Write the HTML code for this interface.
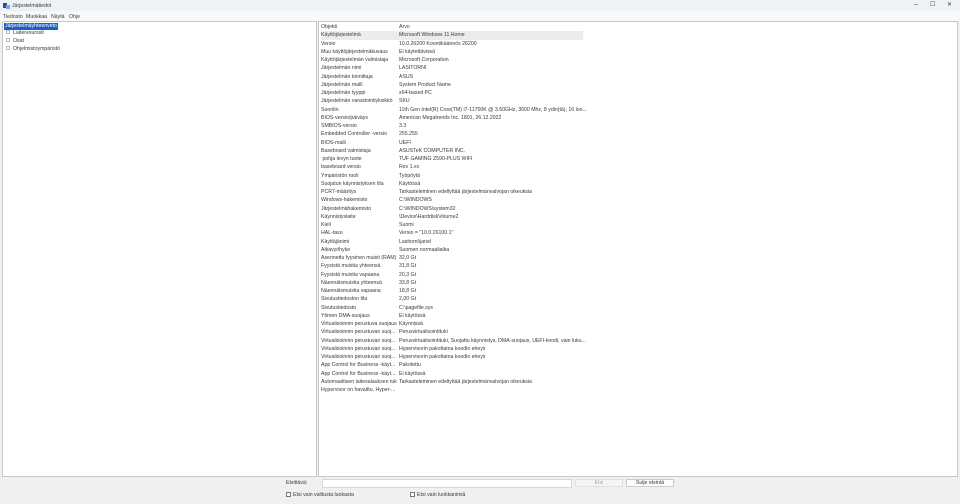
<!DOCTYPE html>
<html><head><meta charset="utf-8">
<style>
*{margin:0;padding:0;box-sizing:border-box}
body{width:960px;height:504px;background:#f0f0f0;font-family:"Liberation Sans",sans-serif;font-size:5.2px;color:#3a3a3a;position:relative;overflow:hidden}
.title{position:absolute;left:0;top:0;width:960px;height:11px;background:#eef2f7}
.title span{position:absolute;left:12px;top:3px}
.menu{position:absolute;left:0;top:11px;width:960px;height:10px;background:#f9f9f9}
.menu span{position:absolute;top:2.5px}
.pane{position:absolute;background:#fff;border:1px solid #c8c8c8}
.rows{position:absolute;left:321px;top:23px}
.r{height:8.25px;line-height:8.25px;white-space:nowrap;position:relative;width:262px}
.r b{font-weight:normal;position:absolute;left:0;width:76px;overflow:hidden}
.r i{font-style:normal;position:absolute;left:78px}
.sel{background:#ececec}
.cb{display:inline-block;width:5px;height:5px;border:1px solid #777;vertical-align:-1px;margin-right:2px;background:#fff}
.btn{position:absolute;height:8px;border:1px solid #ccc;background:#fdfdfd;text-align:center;line-height:6px}
.tree{position:absolute;left:3px;height:7px;line-height:7px;white-space:nowrap}
.plus{display:inline-block;width:4px;height:4px;border:1px solid #bbb;margin-right:3px;vertical-align:0}
</style></head><body>
<div class="title"><svg style="position:absolute;left:3px;top:2px" width="7" height="7"><rect x="0" y="1" width="4" height="5" fill="#2a4d9b"/><rect x="3" y="3" width="4" height="4" fill="#7aa7e0"/></svg><span>Järjestelmätiedot</span>
<span style="left:914px;top:1px;font-size:7px">–</span><span style="left:930px;top:1px;font-size:6px">☐</span><span style="left:947px;top:1px;font-size:6px">✕</span></div>
<div class="menu"><span style="left:3px">Tiedosto</span><span style="left:26px">Muokkaa</span><span style="left:51px">Näytä</span><span style="left:69px">Ohje</span></div>
<div class="pane" style="left:2px;top:21px;width:315px;height:456px">
<div class="tree" style="left:1px;top:1px;background:#1a5fc8;color:#fff;padding:0 1px">Järjestelmäyhteenveto</div>
<div class="tree" style="top:8px"><span class="plus"></span>Laiteresurssit</div>
<div class="tree" style="top:16px"><span class="plus"></span>Osat</div>
<div class="tree" style="top:24px"><span class="plus"></span>Ohjelmistoympäristö</div>
</div>
<div class="pane" style="left:318px;top:21px;width:640px;height:456px"></div>
<div class="rows">
<div class="r"><b>Objekti</b><i>Arvo</i></div>
<div class="r sel"><b>Käyttöjärjestelmä</b><i>Microsoft Windows 11 Home</i></div>
<div class="r"><b>Versio</b><i>10.0.26200 Koontikäännös 26200</i></div>
<div class="r"><b>Muu käyttöjärjestelmäkuvaus</b><i>Ei käytettävissä</i></div>
<div class="r"><b>Käyttöjärjestelmän valmistaja</b><i>Microsoft Corporation</i></div>
<div class="r"><b>Järjestelmän nimi</b><i>LASITORNI</i></div>
<div class="r"><b>Järjestelmän toimittaja</b><i>ASUS</i></div>
<div class="r"><b>Järjestelmän malli</b><i>System Product Name</i></div>
<div class="r"><b>Järjestelmän tyyppi</b><i>x64-based PC</i></div>
<div class="r"><b>Järjestelmän varastointiyksikkö</b><i>SKU</i></div>
<div class="r"><b>Suoritin</b><i>11th Gen Intel(R) Core(TM) i7-11700K @ 3.60GHz, 3600 Mhz, 8 ydin(tä), 16 loo...</i></div>
<div class="r"><b>BIOS-versio/päiväys</b><i>American Megatrends Inc. 1801, 26.12.2022</i></div>
<div class="r"><b>SMBIOS-versio</b><i>3.3</i></div>
<div class="r"><b>Embedded Controller -versio</b><i>255.255</i></div>
<div class="r"><b>BIOS-malli</b><i>UEFI</i></div>
<div class="r"><b>Baseboard valmistaja</b><i>ASUSTeK COMPUTER INC.</i></div>
<div class="r"><b>&nbsp;pohja levyn tuote</b><i>TUF GAMING Z590-PLUS WIFI</i></div>
<div class="r"><b>baseboard versio</b><i>Rev 1.xx</i></div>
<div class="r"><b>Ympäristön rooli</b><i>Työpöytä</i></div>
<div class="r"><b>Suojatun käynnistyksen tila</b><i>Käytössä</i></div>
<div class="r"><b>PCR7-määritys</b><i>Tarkasteleminen edellyttää järjestelmänvalvojan oikeuksia</i></div>
<div class="r"><b>Windows-hakemisto</b><i>C:\WINDOWS</i></div>
<div class="r"><b>Järjestelmähakemisto</b><i>C:\WINDOWS\system32</i></div>
<div class="r"><b>Käynnistyslaite</b><i>\Device\HarddiskVolume2</i></div>
<div class="r"><b>Kieli</b><i>Suomi</i></div>
<div class="r"><b>HAL-taso</b><i>Versio = "10.0.26100.1"</i></div>
<div class="r"><b>Käyttäjänimi</b><i>Lasitorni\janel</i></div>
<div class="r"><b>Aikavyöhyke</b><i>Suomen normaaliaika</i></div>
<div class="r"><b>Asennettu fyysinen muisti (RAM)</b><i>32,0 Gt</i></div>
<div class="r"><b>Fyysistä muistia yhteensä</b><i>31,8 Gt</i></div>
<div class="r"><b>Fyysistä muistia vapaana</b><i>20,3 Gt</i></div>
<div class="r"><b>Näennäismuistia yhteensä</b><i>33,8 Gt</i></div>
<div class="r"><b>Näennäismuistia vapaana</b><i>18,8 Gt</i></div>
<div class="r"><b>Sivutustiedoston tila</b><i>2,00 Gt</i></div>
<div class="r"><b>Sivutustiedosto</b><i>C:\pagefile.sys</i></div>
<div class="r"><b>Ytimen DMA-suojaus</b><i>Ei käytössä</i></div>
<div class="r"><b>Virtualisoinnin perustuva suojaus</b><i>Käynnissä</i></div>
<div class="r"><b>Virtualisoinnin perustuvan suoj...</b><i>Perusvirtualisointituki</i></div>
<div class="r"><b>Virtualisoinnin perustuvan suoj...</b><i>Perusvirtualisointituki, Suojattu käynnistys, DMA-suojaus, UEFI-koodi, vain luku...</i></div>
<div class="r"><b>Virtualisoinnin perustuvan suoj...</b><i>Hypervisorin pakottama koodin eheys</i></div>
<div class="r"><b>Virtualisoinnin perustuvan suoj...</b><i>Hypervisorin pakottama koodin eheys</i></div>
<div class="r"><b>App Control for Business -käyt...</b><i>Pakotettu</i></div>
<div class="r"><b>App Control for Business -käyt...</b><i>Ei käytössä</i></div>
<div class="r"><b>Automaattisen laitesalauksen tuki</b><i>Tarkasteleminen edellyttää järjestelmänvalvojan oikeuksia</i></div>
<div class="r"><b>Hypervisor on havaittu. Hyper-...</b><i></i></div>
</div>
<div style="position:absolute;left:286px;top:480px">Etsittävä:</div>
<div style="position:absolute;left:322px;top:479px;width:250px;height:9px;background:#fff;border:1px solid #d8d8d8"></div>
<div class="btn" style="left:575px;top:479px;width:48px;color:#aaa;background:#f4f4f4;border-color:#e0e0e0">Etsi</div>
<div class="btn" style="left:626px;top:479px;width:48px">Sulje etsintä</div>
<div style="position:absolute;left:286px;top:492px"><span class="cb"></span>Etsi vain valitusta luokasta</div>
<div style="position:absolute;left:410px;top:492px"><span class="cb"></span>Etsi vain luokkanimiä</div>
</body></html>
